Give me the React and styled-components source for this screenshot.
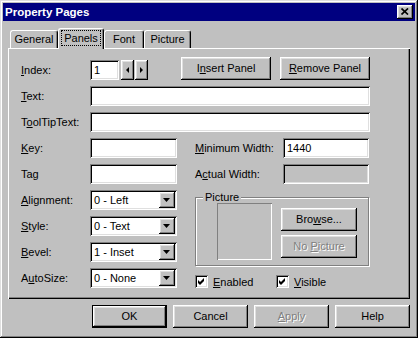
import React from "react";
import styled, { createGlobalStyle, css } from "styled-components";

const Global = createGlobalStyle`
  html, body { margin: 0; padding: 0; background: #c0c0c0; }
  * { box-sizing: border-box; }
`;

const raised = css`
  box-shadow: inset -1px -1px #000, inset 1px 1px #fff, inset -2px -2px #808080, inset 2px 2px #dfdfdf;
`;
const sunken = css`
  box-shadow: inset 1px 1px #808080, inset -1px -1px #fff, inset 2px 2px #000, inset -2px -2px #dfdfdf;
`;

const Win = styled.div`
  width: 418px;
  height: 338px;
  padding: 3px;
  background: #c0c0c0;
  box-shadow: inset -1px -1px #000, inset 1px 1px #dfdfdf, inset -2px -2px #808080, inset 2px 2px #fff;
  display: flex;
  flex-direction: column;
  font: 11px "Liberation Sans", Arial, sans-serif;
  color: #000;
`;

const TitleBar = styled.div`
  height: 18px;
  background: #000080;
  color: #fff;
  display: flex;
  align-items: center;
  justify-content: space-between;
  padding: 0 2px;
  font-weight: bold;
  font-size: 11.5px;
`;

const CloseBtn = styled.div`
  width: 16px;
  height: 14px;
  background: #c0c0c0;
  ${raised};
  display: flex;
  align-items: center;
  justify-content: center;
  padding: 0 1px 1px 0;
`;

const Body = styled.div`
  padding: 7px 5px 0 5px;
  display: flex;
  flex-direction: column;
`;

const Tabs = styled.div`
  display: flex;
  align-items: flex-end;
  height: 20px;
  padding-left: 2px;
  position: relative;
  z-index: 1;
`;

const Tab = styled.div`
  width: ${(p) => p.$w}px;
  height: ${(p) => (p.$active ? 21 : 18)}px;
  margin-bottom: ${(p) => (p.$active ? -1 : 0)}px;
  background: #c0c0c0;
  border: 1px solid #fff;
  border-bottom: none;
  border-right-color: #000;
  border-radius: 3px 3px 0 0;
  box-shadow: inset -1px 0 #808080;
  display: flex;
  align-items: center;
  justify-content: center;
  padding-bottom: ${(p) => (p.$active ? 3 : 1)}px;
`;

const Focus = styled.span`
  outline: 1px dotted #000;
  outline-offset: 1px;
  padding: 0 1px;
`;

const Panel = styled.div`
  background: #c0c0c0;
  box-shadow: inset 1px 1px #fff, inset -1px -1px #000, inset -2px -2px #808080;
  padding: 9px 40px 11px 13px;
  display: flex;
  flex-direction: column;
  gap: 6px;
`;

const Row = styled.div`
  display: flex;
  align-items: ${(p) => (p.$bottom ? "flex-end" : "center")};
  height: ${(p) => p.$h || 20}px;
  margin-top: ${(p) => p.$mt || 0}px;
`;

const Label = styled.div`
  width: ${(p) => p.$w || 69}px;
  flex: none;
  white-space: nowrap;
  align-self: center;
`;

const Field = styled.div`
  height: 20px;
  width: ${(p) => (p.$w ? `${p.$w}px` : "auto")};
  flex: ${(p) => (p.$w ? "none" : "1")};
  background: ${(p) => (p.$disabled ? "#c0c0c0" : "#fff")};
  ${sunken};
  padding: 0 4px;
  display: flex;
  align-items: center;
`;

const SpinBtn = styled.div`
  width: 13px;
  height: 20px;
  margin-left: ${(p) => p.$ml}px;
  background: #c0c0c0;
  ${raised};
  display: flex;
  align-items: center;
  justify-content: center;
  padding: 0 1px 1px 0;
`;

const BtnGroup = styled.div`
  margin-left: auto;
  display: flex;
  gap: 9px;
`;

const Button = styled.div`
  width: ${(p) => p.$w || 75}px;
  height: 23px;
  flex: none;
  background: #c0c0c0;
  border: ${(p) => (p.$default ? "1px solid #000" : "none")};
  ${raised};
  display: flex;
  align-items: center;
  justify-content: center;
  padding-bottom: 1px;
  color: ${(p) => (p.$disabled ? "#808080" : "#000")};
  text-shadow: ${(p) => (p.$disabled ? "1px 1px #fff" : "none")};
  white-space: nowrap;
`;

const TwoCol = styled.div`
  display: grid;
  grid-template-columns: 156px 174px;
  column-gap: 18px;
`;

const Col = styled.div`
  display: flex;
  flex-direction: column;
  gap: ${(p) => p.$gap || 0}px;
`;

const Combo = styled.div`
  width: 87px;
  height: 20px;
  background: #fff;
  ${sunken};
  padding: 2px;
  display: flex;
  align-items: center;
`;

const ComboText = styled.div`
  flex: 1;
  padding-left: 2px;
  white-space: nowrap;
`;

const ComboBtn = styled.div`
  width: 16px;
  height: 16px;
  background: #c0c0c0;
  ${raised};
  display: flex;
  align-items: center;
  justify-content: center;
  padding: 0 1px 1px 0;
`;

const Group = styled.fieldset`
  margin: 7px 0 0;
  padding: 0;
  min-width: 0;
  border: 1px solid #808080;
  box-shadow: inset 1px 1px #fff, 1px 1px #fff;
`;

const Legend = styled.legend`
  margin-left: 7px;
  padding: 0 2px;
  line-height: 12px;
  background: #c0c0c0;
`;

const GroupInner = styled.div`
  display: flex;
  gap: 9px;
  padding: 0 11px 5px 21px;
`;

const PicBox = styled.div`
  width: 55px;
  height: 57px;
  box-shadow: inset 1px 1px #808080, inset -1px -1px #fff;
`;

const GroupBtns = styled.div`
  display: flex;
  flex-direction: column;
  gap: 4px;
  padding-top: 5px;
`;

const CheckRow = styled.div`
  display: flex;
  margin-top: 9px;
  height: 13px;
`;

const CheckItem = styled.div`
  width: 81px;
  display: flex;
  align-items: center;
  gap: 5px;
`;

const CheckBox = styled.div`
  width: 13px;
  height: 13px;
  background: #fff;
  ${sunken};
  display: flex;
  align-items: center;
  justify-content: center;
`;

const Footer = styled.div`
  margin-top: 6px;
  display: flex;
  justify-content: flex-end;
  gap: 6px;
`;

const Tri = ({ dir }) => {
  const pts =
    dir === "left"
      ? "3,0 3,6 0,3"
      : dir === "right"
      ? "0,0 0,6 3,3"
      : "0,0 7,0 3.5,4";
  const w = dir === "down" ? 7 : 3;
  const h = dir === "down" ? 4 : 6;
  return (
    <svg width={w} height={h} viewBox={`0 0 ${w} ${h}`}>
      <polygon points={pts} fill="#000" />
    </svg>
  );
};

const Check = () => (
  <svg width="9" height="9" viewBox="0 0 9 9">
    <polygon points="1,3 3,5 7,1 7,4 3,8 1,6" fill="#000" />
  </svg>
);

const DropCombo = ({ children }) => (
  <Combo>
    <ComboText>{children}</ComboText>
    <ComboBtn>
      <Tri dir="down" />
    </ComboBtn>
  </Combo>
);

export default function App() {
  return (
    <>
      <Global />
      <Win>
        <TitleBar>
          <span>Property Pages</span>
          <CloseBtn>
            <svg width="8" height="7" viewBox="0 0 8 7">
              <path d="M0.5 0.5 L7 6.5 M7 0.5 L0.5 6.5" stroke="#000" strokeWidth="1.7" />
            </svg>
          </CloseBtn>
        </TitleBar>
        <Body>
          <Tabs>
            <Tab $w={48}>General</Tab>
            <Tab $w={46} $active>
              <Focus>Panels</Focus>
            </Tab>
            <Tab $w={40}>Font</Tab>
            <Tab $w={47}>Picture</Tab>
          </Tabs>
          <Panel>
            <Row $h={23} $bottom>
              <Label style={{ paddingTop: 3 }}>
                <span><u>I</u>ndex:</span>
              </Label>
              <Field $w={29}>1</Field>
              <SpinBtn $ml={2}>
                <Tri dir="left" />
              </SpinBtn>
              <SpinBtn $ml={1}>
                <Tri dir="right" />
              </SpinBtn>
              <BtnGroup>
                <Button $w={90}>
                  <span>I<u>n</u>sert Panel</span>
                </Button>
                <Button $w={90}>
                  <span><u>R</u>emove Panel</span>
                </Button>
              </BtnGroup>
            </Row>
            <Row>
              <Label>
                <u>T</u>ext:
              </Label>
              <Field />
            </Row>
            <Row>
              <Label>
                T<u>o</u>olTipText:
              </Label>
              <Field />
            </Row>
            <TwoCol>
              <Col $gap={6}>
                <Row>
                  <Label>
                    <u>K</u>ey:
                  </Label>
                  <Field $w={87} />
                </Row>
                <Row>
                  <Label>Tag</Label>
                  <Field $w={87} />
                </Row>
                <Row>
                  <Label>
                    <u>A</u>lignment:
                  </Label>
                  <DropCombo>0 - Left</DropCombo>
                </Row>
                <Row>
                  <Label>
                    <u>S</u>tyle:
                  </Label>
                  <DropCombo>0 - Text</DropCombo>
                </Row>
                <Row>
                  <Label>
                    <u>B</u>evel:
                  </Label>
                  <DropCombo>1 - Inset</DropCombo>
                </Row>
                <Row>
                  <Label>
                    A<u>u</u>toSize:
                  </Label>
                  <DropCombo>0 - None</DropCombo>
                </Row>
              </Col>
              <Col>
                <Row>
                  <Label $w={88}>
                    <u>M</u>inimum Width:
                  </Label>
                  <Field $w={86}>1440</Field>
                </Row>
                <Row $mt={6}>
                  <Label $w={88}>
                    A<u>c</u>tual Width:
                  </Label>
                  <Field $w={86} $disabled />
                </Row>
                <Group>
                  <Legend>Picture</Legend>
                  <GroupInner>
                    <PicBox />
                    <GroupBtns>
                      <Button $w={76}>
                        <span>Bro<u>w</u>se...</span>
                      </Button>
                      <Button $w={76} $disabled>
                        <span>No <u>P</u>icture</span>
                      </Button>
                    </GroupBtns>
                  </GroupInner>
                </Group>
                <CheckRow>
                  <CheckItem>
                    <CheckBox>
                      <Check />
                    </CheckBox>
                    <span>
                      <u>E</u>nabled
                    </span>
                  </CheckItem>
                  <CheckItem>
                    <CheckBox>
                      <Check />
                    </CheckBox>
                    <span>
                      <u>V</u>isible
                    </span>
                  </CheckItem>
                </CheckRow>
              </Col>
            </TwoCol>
          </Panel>
          <Footer>
            <Button $default>OK</Button>
            <Button>Cancel</Button>
            <Button $disabled>
              <span><u>A</u>pply</span>
            </Button>
            <Button>Help</Button>
          </Footer>
        </Body>
      </Win>
    </>
  );
}
